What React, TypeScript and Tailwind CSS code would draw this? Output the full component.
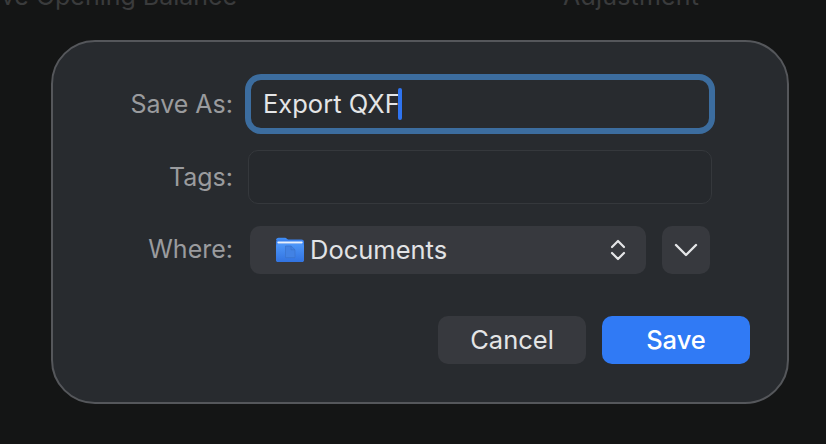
function FolderIcon() {
  return (
    <svg width="28" height="26" viewBox="0 0 28 26" className="shrink-0">
      <defs>
        <linearGradient id="folderFront" x1="0" y1="0" x2="0" y2="1">
          <stop offset="0" stopColor="#4d96f8" />
          <stop offset="1" stopColor="#3273e0" />
        </linearGradient>
      </defs>
      <path d="M0 3.5C0 1.6 1 .8 2.6.8h6c1 0 1.6.3 2.3 1l1.6 1.4H0z" fill="#3f8cf5" />
      <rect x="0" y="2.6" width="28" height="22.4" rx="2.6" fill="#3b82ee" />
      <rect x="1.4" y="4.4" width="25.2" height="2" rx="0.6" fill="#e8f0fc" />
      <rect x="0" y="7" width="28" height="18" rx="2.4" fill="url(#folderFront)" />
      <path d="M9.5 9h5.6L19 12.8V20.6H9.5z" fill="#4282e4" stroke="#3a72cc" strokeWidth="0.7" />
      <path d="M15 9v3.8h4" fill="none" stroke="#3a72cc" strokeWidth="0.7" />
    </svg>
  );
}

function UpDownIcon() {
  return (
    <svg width="16" height="22" viewBox="0 0 16 22" fill="none" stroke="#e4e5e7" strokeWidth="2.2" strokeLinecap="round" strokeLinejoin="round">
      <path d="M2 8l6-6 6 6" />
      <path d="M2 14l6 6 6-6" />
    </svg>
  );
}

function DownIcon() {
  return (
    <svg width="24" height="14" viewBox="0 0 24 14" fill="none" stroke="#e4e5e7" strokeWidth="2.4" strokeLinecap="round" strokeLinejoin="round">
      <path d="M2 2l10 10L22 2" />
    </svg>
  );
}

export default function App() {
  return (
    <div className="w-[826px] h-[444px] overflow-hidden bg-[#141515] font-['Inter',sans-serif]">
      {/* Sheet backdrop, text cut off at the top */}
      <div className="h-[40px] overflow-hidden flex text-[25px] leading-[30px] text-[#3a3b3c]">
        <span className="-ml-[29px] -mt-[19px] w-[592px] whitespace-nowrap">Save Opening Balance</span>
        <span className="-mt-[19px] whitespace-nowrap tracking-[0.2px]">Adjustment</span>
      </div>

      {/* Dialog */}
      <div className="ml-[51px] w-[738px] h-[364px] rounded-[44px] border-2 border-[#55575b] bg-[#282b2f] pt-[32px] text-[25px]">
        {/* Save As */}
        <div className="flex items-center h-[60px]">
          <span className="w-[180px] pt-[2px] text-right text-[#9a9b9e]">Save As:</span>
          <div className="ml-[12px] w-[470px] h-[60px] rounded-[16px] border-[6px] border-[#3c6d9f] bg-[#282b2f] flex items-center pl-[12px] text-[#e4e5e6] text-[25.5px]">
            <span className="leading-none">Export QXF</span>
            <span className="w-[4px] h-[32px] -ml-[2px] rounded-[2px] bg-[#2f74f0]" />
          </div>
        </div>

        {/* Tags */}
        <div className="flex items-center h-[54px] mt-[16px]">
          <span className="w-[180px] pt-[2px] text-right text-[#9a9b9e]">Tags:</span>
          <div className="ml-[15px] w-[464px] h-[54px] rounded-[10px] border border-[#35383c] bg-[#26292d]" />
        </div>

        {/* Where */}
        <div className="flex items-center h-[48px] mt-[22px]">
          <span className="w-[180px] pb-[1px] text-right text-[#9a9b9e]">Where:</span>
          <div className="ml-[17px] w-[396px] h-[48px] rounded-[10px] bg-[#37393e] flex items-center pl-[26px] pr-[20px] text-[#e2e3e5] text-[25.5px]">
            <FolderIcon />
            <span className="ml-[6px] flex-1">Documents</span>
            <UpDownIcon />
          </div>
          <div className="ml-[16px] w-[48px] h-[48px] rounded-[10px] bg-[#37393e] flex items-center justify-center">
            <DownIcon />
          </div>
        </div>

        {/* Buttons */}
        <div className="flex justify-end gap-[16px] mt-[42px] pr-[37px] text-[25.5px]">
          <button className="w-[148px] h-[48px] rounded-[10px] bg-[#37393e] text-[#e4e5e6]">Cancel</button>
          <button className="w-[148px] h-[48px] rounded-[10px] bg-[#307af5] text-white font-medium">Save</button>
        </div>
      </div>
    </div>
  );
}
